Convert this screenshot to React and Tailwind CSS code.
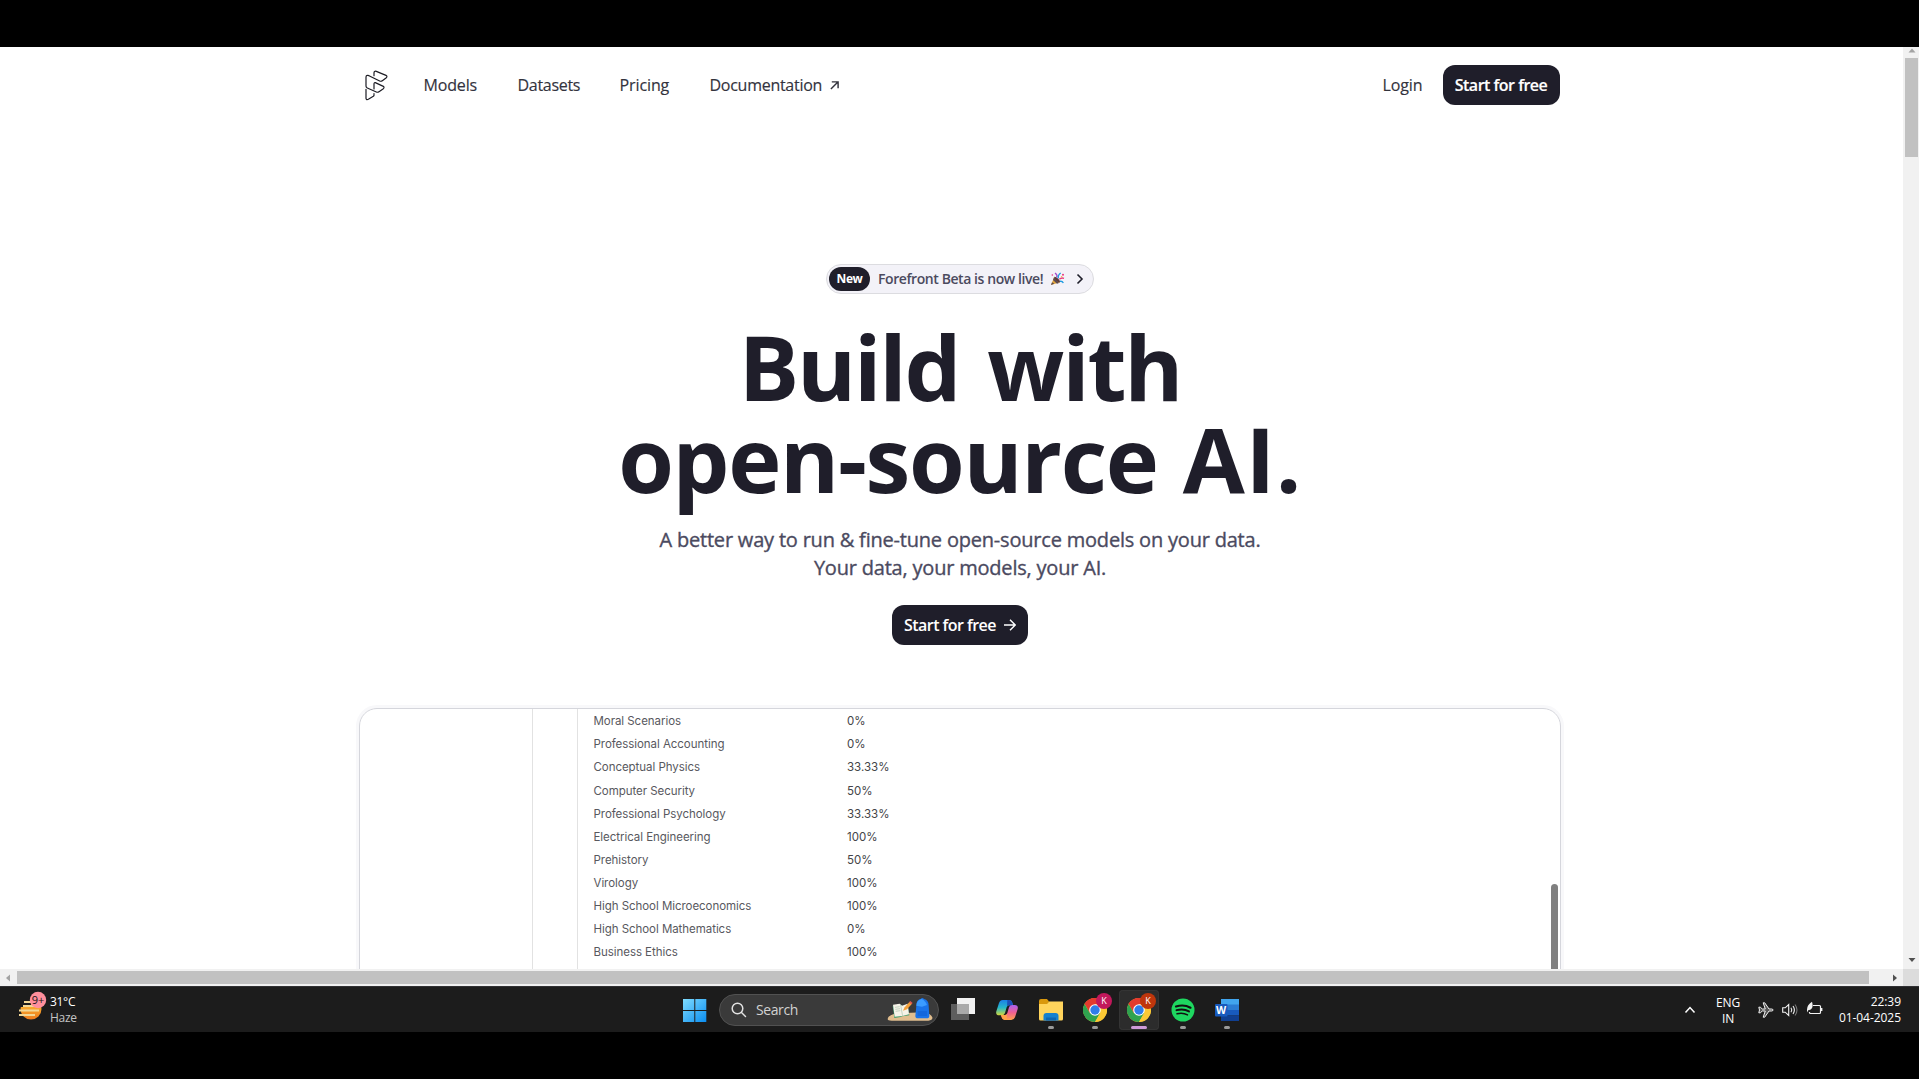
import React from "react";

const rows = [
  ["Moral Scenarios", "0%"],
  ["Professional Accounting", "0%"],
  ["Conceptual Physics", "33.33%"],
  ["Computer Security", "50%"],
  ["Professional Psychology", "33.33%"],
  ["Electrical Engineering", "100%"],
  ["Prehistory", "50%"],
  ["Virology", "100%"],
  ["High School Microeconomics", "100%"],
  ["High School Mathematics", "0%"],
  ["Business Ethics", "100%"],
];

function Logo() {
  return (
    <svg className="h-8 w-6" viewBox="74 87 72 96" fill="none" stroke="#1c1c24" strokeWidth="3.6" strokeLinecap="round" strokeLinejoin="round">
      <path d="M101 107v-8q0-7 7-5l29 12q5 3 1 7l-12 9q-4 3-8 1L86 107q-9-3-9 5v27q0 3 4 5l27 12q4 2 8-1l13-9q4-4 0-7l-24-11q-4-1-4 4v15" />
      <path d="M77 148v27q1 6 7 3l15-9q3-2 2-8" />
    </svg>
  );
}

function Chrome() {
  return (
    <svg className="size-6" viewBox="0 0 24 24">
      <circle cx="12" cy="12" r="12" fill="#fcc934" />
      <path d="M12 12 1.6 6A12 12 0 0 1 22.4 6z" fill="#e33b2e" />
      <path d="M12 6h10.4A12 12 0 0 0 1.6 6L6.8 15z" fill="#e33b2e" />
      <path d="M1.6 6A12 12 0 0 0 12 24l5.2-9L6.8 15z" fill="#2fa34f" />
      <path d="M22.4 6A12 12 0 0 1 12 24l5.2-9L12 6z" fill="#fcc934" />
      <circle cx="12" cy="12" r="5.8" fill="#fff" />
      <circle cx="12" cy="12" r="4.7" fill="#2f7de9" />
    </svg>
  );
}

function Party() {
  return (
    <svg className="size-[15px] shrink-0" viewBox="0 0 45 45">
      <path d="M3 39 13 14l17 17z" fill="#e2a53c" />
      <path d="m3 39 3-8 7 4zM9 24l3-8 15 17-6 2z" fill="#5b4a52" />
      <path d="M13 14q6 0 12 6t5 11q-6 1-12-6t-5-11z" fill="#5a3b3b" />
      <path d="M15 3q9 6 5 13" stroke="#a34bc9" strokeWidth="4" fill="none" />
      <path d="M25 19Q23 9 32 3" stroke="#1e9be0" strokeWidth="4" fill="none" />
      <path d="M28 22q6-6 14-3" stroke="#e8387d" strokeWidth="4" fill="none" />
      <path d="M30 28q7-1 10 5" stroke="#1e9be0" strokeWidth="4" fill="none" />
      <circle cx="39" cy="8" r="3" fill="#e8387d" /><circle cx="7" cy="9" r="2.5" fill="#e8387d" /><circle cx="35" cy="14" r="2" fill="#f5b52e" />
    </svg>
  );
}

function Copilot() {
  return (
    <svg className="size-[22px]" viewBox="0 0 66 66">
      <defs>
        <linearGradient id="ca" x1="0" y1="0" x2="0" y2="1"><stop offset="0" stopColor="#1b7fe8" /><stop offset=".5" stopColor="#25b7c9" /><stop offset="1" stopColor="#d3d83a" /></linearGradient>
        <linearGradient id="cb" x1="0" y1="0" x2="0" y2="1"><stop offset="0" stopColor="#a960f0" /><stop offset=".5" stopColor="#ef5f92" /><stop offset="1" stopColor="#ffa24a" /></linearGradient>
      </defs>
      <path d="M20 3h20q7 0 9 8l2 8H39q-5 0-7 6l-5 17q-2 7-10 7h-7Q-2 49 1 37L9 12q3-9 11-9z" fill="url(#ca)" />
      <path d="M34 3h6q7 0 9 8l2 8H39q-4 0-6 4z" fill="#1b4fb8" />
      <path d="M46 63H26q-7 0-9-8l-2-7h12q5 0 7-6l5-17q2-7 10-7h7q12 0 9 12l-8 25q-3 8-11 8z" fill="url(#cb)" />
      <path d="M32 63h-6q-7 0-9-8l-2-7h12q4 0 6-3z" fill="#ffa24a" />
    </svg>
  );
}

function Slot({ children, active, running }) {
  return (
    <div className={"relative flex h-10 w-10 items-center justify-center rounded " + (active ? "bg-[#2c2c2c] ring-1 ring-inset ring-[#343434]" : "")}>
      {children}
      {active && <span className="absolute bottom-[1px] h-[3px] w-4 rounded-full bg-[#cf9bd8]" />}
      {running && <span className="absolute bottom-[1px] h-[3px] w-1.5 rounded-full bg-[#9a9a9a]" />}
    </div>
  );
}

function Badge({ className }) {
  return (
    <span className={"absolute left-[21px] top-[3px] flex size-4 items-center justify-center rounded-full text-[9px] font-medium text-white " + className}>K</span>
  );
}

function Taskbar() {
  return (
    <footer className="flex h-[46px] shrink-0 justify-between border-t border-[#303033] bg-[#1c1c1c] text-xs text-white">
      <div className="flex w-[683px] pl-[18px] pt-1">
        <svg className="h-8 w-8" viewBox="0 0 32 32">
          <defs><linearGradient id="sun" x1="0" y1="0" x2="0" y2="1"><stop offset="0" stopColor="#ffc83a" /><stop offset="1" stopColor="#ee7b1c" /></linearGradient></defs>
          <circle cx="13" cy="18" r="10.5" fill="url(#sun)" />
          <path d="M4 5h9v11H2V9z" fill="#1c1c1c" />
          <path d="M6 11h12M5 15h13M1 19.500h20M1 24h16" stroke="#f3d795" strokeWidth="1.800" />
          <circle cx="20" cy="9" r="8.200" fill="#ff8f9c" />
          <text x="20" y="13" textAnchor="middle" fontSize="11" fill="#201416">9+</text>
        </svg>
        <div className="leading-4 tracking-[-0.3px]">
          <div className="mt-[3px]">31°C</div>
          <div className="text-[#c4c4c4]">Haze</div>
        </div>
      </div>
      <div className="flex w-[566px] items-center">
        <svg className="mr-3 size-6 shrink-0" viewBox="0 0 24 24">
          <defs><linearGradient id="win" x1="0" y1="0" x2="1" y2="1"><stop offset="0" stopColor="#7fdcff" /><stop offset="1" stopColor="#0a8df0" /></linearGradient></defs>
          <path d="M0 1h11.300v11H0zM12.300 1h11v11h-11zM0 13h11.300v11H0zM12.300 13h11v11h-11z" fill="url(#win)" />
        </svg>
        <div className="mr-1 flex h-8 w-[220px] shrink-0 items-center rounded-full border border-[#515151] bg-[#3a3a3a] pl-[11px] pr-[5px]">
          <svg className="size-4" viewBox="0 0 16 16" fill="none" stroke="#e2e2e2" strokeWidth="1.500" strokeLinecap="round"><circle cx="6.500" cy="6.500" r="5.300" /><path d="m10.500 10.500 4 4" /></svg>
          <span className="ml-[9px] text-sm tracking-[-0.4px] text-[#d2d2d2]">Search</span>
          <svg className="ml-auto h-[26px] w-[46px]" viewBox="0 0 138 78">
            <path d="M2 66q0-12 30-17l80-3q20 5 24 15 2 7-12 10H18Q2 72 2 66z" fill="#e0bd8e" />
            <path d="m17 26 22-4 6 5 17-3 5 31-21 3-5 2-19 3z" fill="#3b9a69" />
            <path d="m18 23 20-3 7 6 17-6 4 32-20 5-23 2z" fill="#f6f3e8" />
            <path d="m41 24 6 34M24 31l14-2M25 37l14-2M26 43l14-2" stroke="#a8c4ac" strokeWidth="2" />
            <path d="m48 41 5-10 15-17 7 6-15 17z" fill="#f3a03a" /><path d="m66 16 4-4 7 6-4 4z" fill="#e2574c" />
            <path d="M88 26q0-18 13-20 5-6 10 0 14 3 14 20l2 31q0 7-8 7H93q-8 0-8-7z" fill="#1a73e8" />
            <path d="M88 26q1-17 16-20 10 4 16 18l-15 5z" fill="#3b9cff" />
            <path d="M92 42h28v15H92z" fill="#1467dc" />
          </svg>
        </div>
        <div className="flex gap-1">
          <Slot>
            <svg className="h-[23px] w-6" viewBox="0 0 24 23"><path d="M6 0h18v16H6z" fill="#f1f1f1" /><path d="M0 6h18v16H0z" fill="#5e5e5e" /><path d="M6 6h12v10H6z" fill="#a9a9a9" /></svg>
          </Slot>
          <Slot><Copilot /></Slot>
          <Slot running>
            <svg className="size-6" viewBox="0 0 24 24">
              <path d="M0 3q0-2 2-2h6l2 2.500L8 7H0z" fill="#d9980d" />
              <path d="M0 6h8l2-2.500h14V21q0 1.500-1.500 1.500h-21Q0 22.500 0 21z" fill="#ffd45c" />
              <path d="M4.500 22.500V18q0-3 3-3h9q3 0 3 3v4.500z" fill="#1680cf" /><path d="M7 19.500h10v3H7z" fill="#0c66b3" />
            </svg>
          </Slot>
          <Slot running><Chrome /><Badge className="bg-[#c2185b]" /></Slot>
          <Slot active><Chrome /><Badge className="bg-[#bf360c]" /></Slot>
          <Slot running>
            <svg className="size-6" viewBox="0 0 24 24" fill="none" stroke="#111" strokeLinecap="round"><circle cx="12" cy="12" r="11.500" fill="#1ed760" stroke="none" /><path d="M5 8.500q8-2.500 14.500 1.200" strokeWidth="2.200" /><path d="M5.500 12.200q7-2 12.500 1.200" strokeWidth="1.900" /><path d="M6 15.700q6-1.500 10.500 1.200" strokeWidth="1.500" /></svg>
          </Slot>
          <Slot running>
            <svg className="size-6" viewBox="0 0 24 24">
              <path d="M6 1h18v6H6z" fill="#41a5ee" /><path d="M6 6.500h18V12H6z" fill="#2b7cd3" /><path d="M6 12h18v5.500H6z" fill="#185abd" /><path d="M6 17.500h18V23H6z" fill="#103f91" />
              <rect y="6" width="12.500" height="12.500" rx="1" fill="#185abd" />
              <text x="6.200" y="16" textAnchor="middle" fontSize="10.500" fontWeight="700" fill="#fff">W</text>
            </svg>
          </Slot>
        </div>
      </div>
      <div className="flex w-[670px] items-center justify-end pr-[18px]">
        <svg className="mr-5 h-3 w-3" viewBox="0 0 12 12" fill="none" stroke="#fff" strokeWidth="1.500"><path d="m1.500 8.500 4.500-5 4.500 5" /></svg>
        <div className="mr-[18px] w-6 pt-0.5 text-center leading-4 tracking-[-0.2px]">ENG<br />IN</div>
        <svg className="mr-2 size-4" viewBox="0 0 16 16" fill="#555" stroke="#f2f2f2" strokeWidth="1"><path d="M.8 5.200h1.500l2 1.800h3L5.200.8h1.500L11 7h2.700q1.500.3 1.500 1t-1.500 1H11l-4.300 6.200H5.200L7.300 9h-3l-2 1.800H.8L1.500 8z" /></svg>
        <svg className="mr-2 size-4" viewBox="0 0 16 16" fill="none" stroke="#f2f2f2" strokeWidth="1.100"><path d="M.7 5.800h2.500l3.500-3.300v11L3.200 10.200H.7zM9 5.700q1.600 2.300 0 4.600M11 4q2.800 4 0 8" /><path d="M13 2.500q4 5.500 0 11" stroke="#777" /></svg>
        <svg className="mr-[15px] size-[17px]" viewBox="0 0 17 17" fill="none" stroke="#f2f2f2" strokeWidth="1.200"><path d="M7 4.500h6.500q1 0 1 1v6q0 1-1 1h-9q-1 0-1-1V11" /><path d="M15.500 7v3" strokeWidth="1.800" /><path d="M1 8.500Q1 4 6 .8q1.500 5-.5 7-1.500 1.500-3 1.200L1 11.500z" fill="#f2f2f2" stroke="none" /></svg>
        <div className="w-[63px] whitespace-nowrap text-right leading-4 tracking-[-0.05px]">22:39<br />01-04-2025</div>
      </div>
    </footer>
  );
}

export default function App() {
  return (
    <div className="flex h-[1079px] w-[1919px] flex-col overflow-hidden bg-black pb-[47px] pt-[47px] font-['Open_Sans','Noto_Sans',sans-serif]">
      <div className="flex h-[922px] shrink-0 bg-white">
        <main className="flex min-w-0 flex-1 flex-col overflow-hidden pl-[17px]">
          <nav className="mx-auto mt-[18px] flex h-10 w-[1201px] shrink-0 items-center pl-[5px] pr-px text-base leading-6 text-[#33333d] [-webkit-text-stroke:0.15px]">
            <Logo />
            <a className="ml-[35px] w-[94px] whitespace-nowrap tracking-[-0.15px]">Models</a>
            <a className="w-[102px] whitespace-nowrap tracking-[-0.3px]">Datasets</a>
            <a className="w-[90px] whitespace-nowrap tracking-[-0.1px]">Pricing</a>
            <a className="flex items-center whitespace-nowrap tracking-[-0.27px]">
              Documentation
              <svg className="ml-2 size-[9px]" viewBox="0 0 10 10" fill="none" stroke="currentColor" strokeWidth="1.600"><path d="m1 9 7.500-7.500M2 1h7v7" /></svg>
            </a>
            <a className="ml-auto mr-5 tracking-[-0.1px]">Login</a>
            <a className="flex h-10 w-[117px] items-center justify-center whitespace-nowrap rounded-xl bg-[#1f1e2a] font-semibold tracking-[-0.5px] text-white">Start for free</a>
          </nav>
          <section className="mt-[159px] flex shrink-0 flex-col items-center">
            <div className="flex h-[30px] w-[268px] items-center rounded-full border border-[#dcdce0] bg-[#f3f2f8] pl-[2px] pr-[9px]">
              <span className="flex h-6 w-[41px] items-center justify-center rounded-full bg-[#1f1e2a] text-xs font-bold tracking-[-0.4px] text-white">New</span>
              <span className="ml-2 mr-[7px] w-[165px] whitespace-nowrap text-sm font-semibold tracking-[-0.42px] text-[#4b4a5e]">Forefront Beta is now live!</span>
              <Party />
              <svg className="ml-auto h-3 w-2" viewBox="0 0 8 12" fill="none" stroke="#1f1e2a" strokeWidth="1.600"><path d="m1.500 1.500 4.500 4.500-4.500 4.500" /></svg>
            </div>
            <h1 className="mt-[26px] flex flex-col items-center whitespace-nowrap text-[90px] font-bold leading-[92px] text-[#1f1e2a]">
              <span className="tracking-[-2.2px] [word-spacing:7px]">Build with</span>
              <span className="tracking-[-1.3px] [word-spacing:3px]">open-source <span className="tracking-[0.5px]">AI.</span></span>
            </h1>
            <p className="mt-[22px] whitespace-nowrap text-center text-xl leading-7 tracking-[-0.2px] text-[#4b4a60] [-webkit-text-stroke:0.35px]">
              A better way to run &amp; fine-tune open-source models on your data.<br />Your data, your models, your AI.
            </p>
            <a className="mt-[23px] flex h-10 w-[136px] items-center justify-center gap-2 whitespace-nowrap rounded-xl bg-[#1f1e2a] text-base font-semibold tracking-[-0.55px] text-white">
              Start for free
              <svg className="size-3" viewBox="0 0 12 12" fill="none" stroke="currentColor" strokeWidth="1.400"><path d="M0 6h11M6 .8 11.200 6 6 11.200" /></svg>
            </a>
          </section>
          <section className="mx-auto mt-[63px] flex h-[300px] w-[1202px] shrink-0 rounded-t-[18px] border border-[#d5d6dc] ring-[3px] ring-[#f8f8fa]">
            <div className="w-[173px] border-r border-[#e2e2e2]" />
            <div className="w-[45px] border-r border-[#e2e2e2]" />
            <div className="pl-[15.5px] pt-[1.5px] font-['Inter',sans-serif] text-[11.5px] text-[#58585e]">
              {rows.map(([name, score]) => (
                <div key={name} className="flex h-[23.05px] items-center">
                  <span className="w-[253.5px] whitespace-nowrap tracking-[-0.05px]">{name}</span>
                  <span className="text-[#444448]">{score}</span>
                </div>
              ))}
            </div>
            <div className="ml-auto mr-[2px] mt-[175px] w-[7px] rounded-t-full bg-[#808080]" />
          </section>
        </main>
        <aside className="flex w-4 shrink-0 flex-col items-center bg-[#f1f1f1] pl-0.5 pr-px">
          <svg className="h-[11px] w-2 shrink-0" viewBox="0 0 8 11"><path d="M.5 5.500 4 1.500l3.500 4z" fill="#a3a3a3" /></svg>
          <div className="h-[99px] w-full bg-[#c1c1c1]" />
          <svg className="mb-[7px] mt-auto h-1 w-2" viewBox="0 0 8 4"><path d="M.5 0h7L4 4z" fill="#505050" /></svg>
        </aside>
      </div>
      <div className="flex h-[17px] shrink-0 items-center bg-[#f1f1f1]">
        <svg className="ml-1.5 mr-[7px] h-2 w-1" viewBox="0 0 4 8"><path d="M4 .5v7L0 4z" fill="#a3a3a3" /></svg>
        <div className="h-[13px] w-[1852px] bg-[#c1c1c1]" />
        <svg className="ml-6 h-2 w-1" viewBox="0 0 4 8"><path d="M0 .5v7L4 4z" fill="#505050" /></svg>
        <div className="ml-auto h-full w-4 bg-[#dcdcdc]" />
      </div>
      <Taskbar />
    </div>
  );
}
